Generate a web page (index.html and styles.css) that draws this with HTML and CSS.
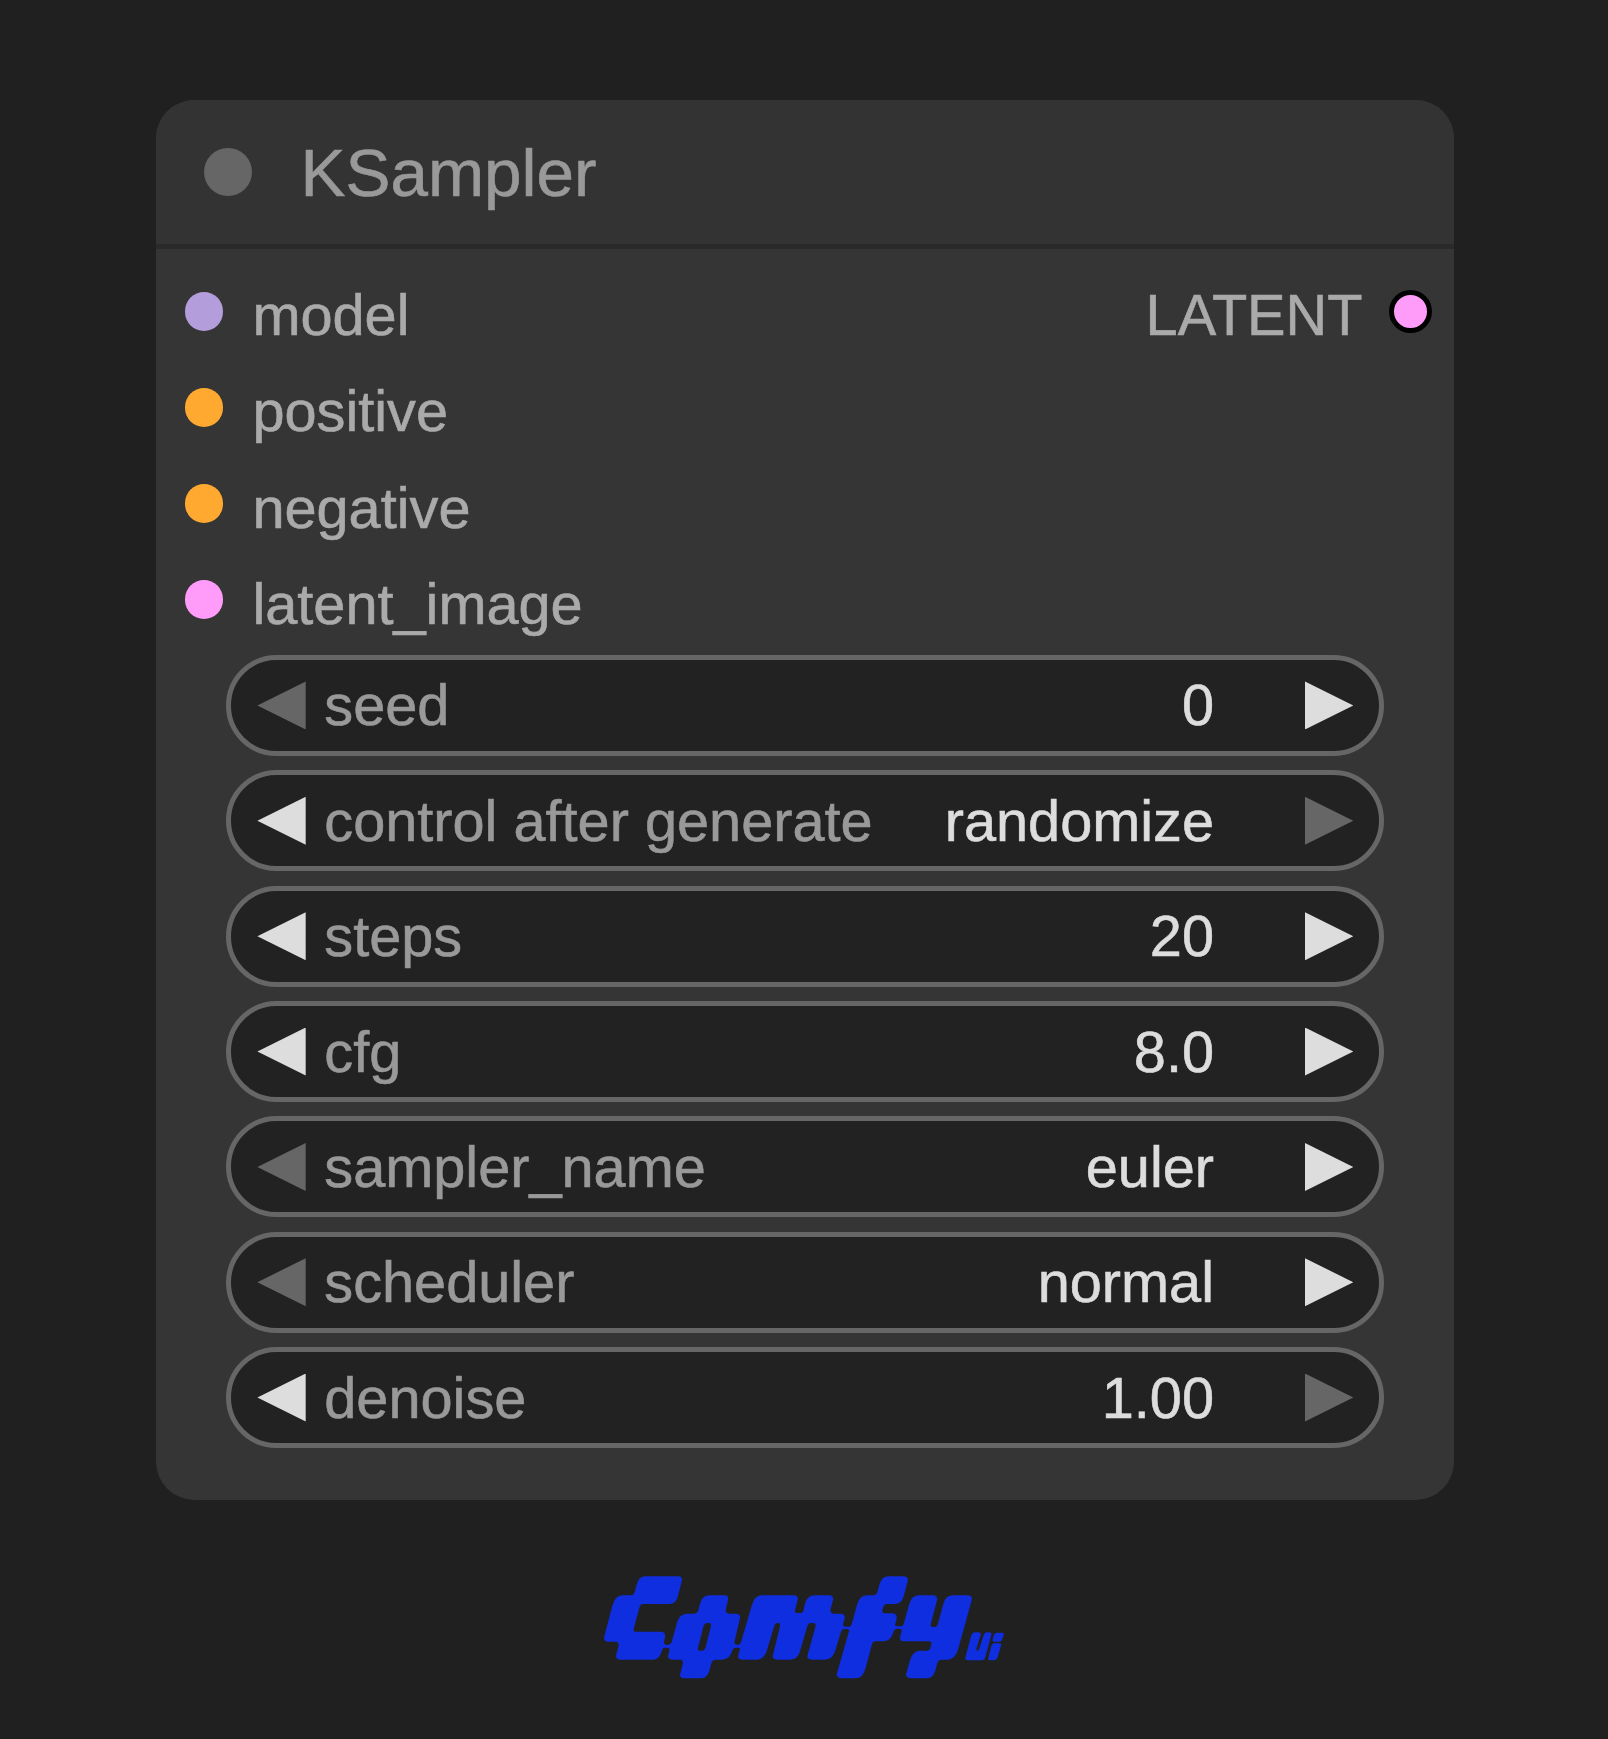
FILE: index.html
```html
<!DOCTYPE html>
<html lang="en">
<head>
<meta charset="utf-8">
<title>KSampler</title>
<link rel="stylesheet" href="styles.css">
</head>
<body>
<main class="node">
  <header class="node-header"><span class="status"></span><h1 class="title">KSampler</h1></header>
  <section class="slots">
    <ul class="inputs">
      <li class="slot"><span class="dot model"></span><span class="slot-label">model</span></li>
      <li class="slot"><span class="dot conditioning"></span><span class="slot-label">positive</span></li>
      <li class="slot"><span class="dot conditioning"></span><span class="slot-label">negative</span></li>
      <li class="slot"><span class="dot latent"></span><span class="slot-label">latent_image</span></li>
    </ul>
    <div class="slot output"><span class="slot-label">LATENT</span><span class="dot latent linked"></span></div>
  </section>
  <section class="widgets">
    <div class="widget"><span class="arrow prev off"></span><span class="name">seed</span><span class="value">0</span><span class="arrow next"></span></div>
    <div class="widget"><span class="arrow prev"></span><span class="name">control after generate</span><span class="value">randomize</span><span class="arrow next off"></span></div>
    <div class="widget"><span class="arrow prev"></span><span class="name">steps</span><span class="value">20</span><span class="arrow next"></span></div>
    <div class="widget"><span class="arrow prev"></span><span class="name">cfg</span><span class="value">8.0</span><span class="arrow next"></span></div>
    <div class="widget"><span class="arrow prev off"></span><span class="name">sampler_name</span><span class="value">euler</span><span class="arrow next"></span></div>
    <div class="widget"><span class="arrow prev off"></span><span class="name">scheduler</span><span class="value">normal</span><span class="arrow next"></span></div>
    <div class="widget"><span class="arrow prev"></span><span class="name">denoise</span><span class="value">1.00</span><span class="arrow next off"></span></div>
  </section>
</main>
<svg class="logo" viewBox="30 40 1230 330" role="img" aria-label="ComfyUI">
  <path fill-rule="evenodd" d="M166 50L264 50Q279 50 275 66L263 112Q257 133 238 133L158 133Q151 133 149 141L131 208Q129 216 137 216L211 216Q228 216 225 232L222 247Q221 255 230 255L236 255Q242 255 245 247L262 186Q269 162 293 162L312 162Q322 162 325 152L330 132Q337 107 359 107L402 107Q417 107 414 121L408 147Q405 162 418 162L438 162Q452 162 450 176L434 244Q431 255 441 255L446 255Q451 254 453 247L486 135Q494 107 517 107L610 107Q626 107 623 121L615 152Q613 160 622 160L632 160Q638 160 641 150L645 132Q652 107 675 107L716 107Q732 107 729 121L722 148Q719 162 732 162L750 162Q767 162 764 177L760 190Q757 201 767 201L778 201Q784 200 786 191L801 135Q809 107 832 107L850 107Q859 107 862 98L867 78Q874 50 897 50L938 50Q957 50 953 65L941 110Q935 133 914 133L890 133Q882 133 880 141L877 152Q875 161 884 161L903 161Q923 161 920 176L916 192Q914 200 922 200L935 200Q940 199 942 190L957 135Q965 107 988 107L1026 107Q1045 107 1041 122L1023 190Q1020 202 1028 202L1034 202Q1041 202 1044 192L1060 132Q1067 107 1090 107L1130 107Q1149 107 1145 122L1104 270Q1095 300 1070 300L1055 300Q1045 300 1042 310L1036 333Q1029 356 1008 356L965 356Q945 356 949 341L960 302Q968 273 990 273L1010 273Q1019 273 1021 264L1024 254Q1026 245 1017 245L942 245Q927 245 931 230L934 217Q937 207 930 207L920 207Q914 207 911 215Q903 245 880 245L858 245Q848 245 846 254L826 328Q818 356 797 356L757 356Q737 356 741 341L777 215Q778 208 773 208L762 208Q756 208 753 216L736 272Q729 300 704 300L666 300Q649 300 653 286L676 202Q679 190 669 190L662 190Q655 190 652 200L629 278Q622 300 600 300L562 300Q545 300 549 286L570 200Q572 190 564 190L562 190Q555 190 553 198L530 275Q522 300 498 300L458 300Q441 300 445 286L449 271Q451 264 444 264L436 264Q430 264 427 272L424 280Q417 300 394 300L378 300Q367 300 364 311L358 333Q351 356 330 356L285 356Q267 356 271 341L278 316Q282 300 270 300L248 300Q231 300 235 286L238 272Q240 264 232 264L224 264Q219 264 217 270L213 280Q207 300 187 300L92 300Q75 300 79 284L85 262Q89 246 77 246L56 246Q39 246 43 230L68 135Q76 107 100 107L122 107Q131 107 134 98L139 78Q146 50 166 50ZM351 190h6q8 0 6 8L347 262q-3 11-11 11h-6q-8 0-6-8L341 198q3-8 10-8ZM1156 218L1166 218Q1174 218 1172 226L1159 268q-1 5 3 5q4 0 5-4L1181 227Q1184 218 1192 218L1198 218q8 0 6 8L1186 292q-2 10-12 10L1133 302q-9 0-7-8L1143 230q3-12 13-12ZM1220 219L1236 219q7 0 5 7L1237 238q-2 8-11 8h-14q-6 0-4-7l3-11q3-9 9-9ZM1213 251L1228 251q7 0 5 7L1223 292q-3 10-13 10h-10q-7 0-5-7L1203 262q3-11 10-11Z"/>
</svg>
</body>
</html>
```

FILE: styles.css
```css
* { box-sizing: border-box; margin: 0; padding: 0; }

body {
  display: flex;
  flex-direction: column;
  align-items: flex-start;
  height: 1739px;
  padding: 100px 0 0 156px;
  overflow: hidden;
  background: #202020;
  font-family: "Liberation Sans", Arial, sans-serif;
  font-size: 57.7px;
  line-height: 66px;
  -webkit-text-stroke: 0.6px currentColor;
}

.node {
  width: 1297.5px;
  height: 1400.3px;
  flex: none;
  border-radius: 38.5px;
  background: #353535;
  overflow: hidden;
}

.node-header {
  display: flex;
  align-items: center;
  gap: 48.5px;
  height: 149px;
  padding: 0 48px;
  border-bottom: 5px solid #2a2a2a;
  background: #333;
}

.status { width: 48px; height: 48px; border-radius: 50%; background: #666; }
.title { padding-top: 2px; font-size: 67.4px; font-weight: 400; line-height: 76px; color: #999; }

.slots {
  display: flex;
  justify-content: space-between;
  padding: 14.2px 21.5px 0 28.9px;
}
.inputs { list-style: none; }
.slot { display: flex; align-items: center; gap: 28.9px; height: 96.15px; color: #aaa; }
.slot-label { padding-top: 8px; }
.dot { width: 38.6px; height: 38.6px; border-radius: 50%; }
.model { background: #b39ddb; }
.conditioning { background: #ffa931; }
.latent { background: #ff9cf9; }
.linked { width: 43px; height: 43px; border: 5px solid #000; }
.output { gap: 26.5px; }

.widgets {
  display: flex;
  flex-direction: column;
  gap: 14.37px;
  padding: 7.2px 69.5px 0 70px;
}
.widget {
  display: flex;
  align-items: center;
  height: 101px;
  padding: 0 25.7px 0 26.4px;
  border: 5px solid #666;
  border-radius: 50.5px;
  background: #222;
  color: #999;
}
.name { margin-left: 18.6px; }
.value { margin: 0 91px 0 auto; color: #ddd; }
.arrow { width: 48.3px; height: 48px; background: #ddd; }
.prev { clip-path: polygon(0 50%, 100% 0, 100% 100%); }
.next { clip-path: polygon(0 0, 100% 50%, 0 100%); }
.off { background: #666; }

.logo { flex: none; width: 410px; height: 110px; margin: 73.03px 0 0 444px; fill: #0f2ee0; }
```
